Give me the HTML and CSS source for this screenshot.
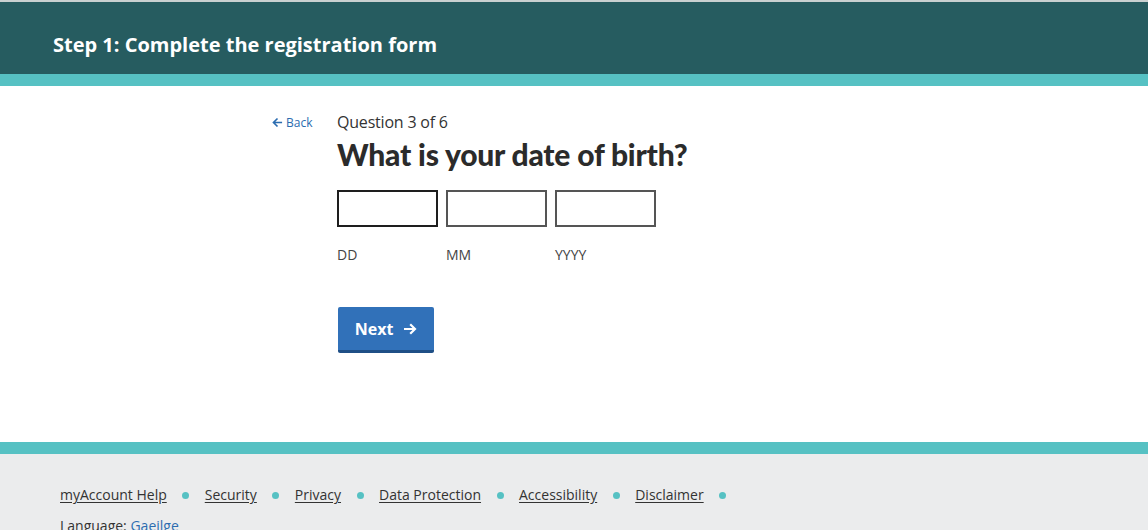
FILE: index.html
```html
<!DOCTYPE html>
<html lang="en">
<head>
<meta charset="utf-8">
<title>Step 1: Complete the registration form</title>
<link rel="stylesheet" href="styles.css">
</head>
<body>
<header class="site-header">
  <div class="header-bar">
    <h1 class="header-title">Step 1: Complete the registration form</h1>
  </div>
  <div class="header-stripe"></div>
</header>
<main class="content">
  <a class="back-link" href="#"><svg class="back-icon" viewBox="0 0 12 12" width="11" height="11" aria-hidden="true"><path d="M11 6H1.8M6 1.6L1.6 6 6 10.4" fill="none" stroke="currentColor" stroke-width="1.8"/></svg>Back</a>
  <div class="question">
    <p class="question-count">Question 3 of 6</p>
    <h2 class="question-title">What is your date of birth?</h2>
    <div class="date-fields">
      <div class="date-field">
        <input class="date-input date-input-focus" type="text" aria-label="DD">
        <span class="date-label">DD</span>
      </div>
      <div class="date-field">
        <input class="date-input" type="text" aria-label="MM">
        <span class="date-label">MM</span>
      </div>
      <div class="date-field">
        <input class="date-input" type="text" aria-label="YYYY">
        <span class="date-label">YYYY</span>
      </div>
    </div>
    <button class="next-button" type="button">Next <svg class="next-icon" viewBox="0 0 14 14" width="14" height="14" aria-hidden="true"><path d="M1 7h11M7.2 2.2L12 7 7.2 11.8" fill="none" stroke="currentColor" stroke-width="2.2"/></svg></button>
  </div>
</main>
<footer class="site-footer">
  <div class="footer-stripe"></div>
  <div class="footer-body">
    <ul class="footer-links">
      <li><a href="#">myAccount Help</a></li>
      <li><a href="#">Security</a></li>
      <li><a href="#">Privacy</a></li>
      <li><a href="#">Data Protection</a></li>
      <li><a href="#">Accessibility</a></li>
      <li><a href="#">Disclaimer</a></li>
    </ul>
    <p class="language">Language: <a href="#">Gaeilge</a></p>
  </div>
</footer>
</body>
</html>
```
FILE: styles.css
```css
* { box-sizing: border-box; }
html, body { margin: 0; padding: 0; }
body {
  font-family: "Open Sans", "Noto Sans", sans-serif;
  color: #333;
  background: #fff;
  overflow: hidden;
  height: 530px;
}
.site-header { border-top: 2px solid #c9d0d0; }
.header-bar {
  background: #265c60;
  height: 72px;
  display: flex;
  align-items: center;
  padding-left: 53px;
}
.header-title {
  margin: 0;
  color: #fff;
  font-size: 20px;
  font-weight: 700;
  letter-spacing: 0;
  padding-top: 12px;
}
.header-stripe { height: 12px; background: #56c1c3; }

.content {
  height: 356px;
  display: flex;
  padding-left: 272px;
  padding-top: 27px;
}
.back-link {
  color: #2b6cb0;
  font-size: 12px;
  text-decoration: none;
  display: flex;
  align-items: center;
  gap: 3px;
  height: 18px;
  width: 65px;
}
.back-icon { display: block; }
.question { display: flex; flex-direction: column; }
.question-count {
  margin: 0;
  font-size: 16px;
  line-height: 18px;
  color: #333;
  letter-spacing: -0.2px;
}
.question-title {
  margin: 5px 0 0;
  font-family: Lato, "Open Sans", sans-serif;
  font-weight: 900;
  font-size: 30px;
  line-height: 36px;
  color: #2b2b2b;
  letter-spacing: -0.2px;
}
.date-fields { display: flex; gap: 8px; margin-top: 18px; }
.date-field { display: flex; flex-direction: column; }
.date-input {
  width: 101px;
  height: 37px;
  border: 2px solid #555;
  border-radius: 0;
  margin: 0;
  padding: 0 6px;
  font: inherit;
}
.date-input-focus { border-color: #1e1e1e; }
.date-label {
  margin-top: 19px;
  font-size: 14px;
  line-height: 18px;
  color: #444;
}
.next-button {
  margin-top: 43px;
  margin-left: 1px;
  align-self: flex-start;
  width: 96px;
  height: 46px;
  background: #3171b9;
  border: none;
  border-bottom: 3px solid #1f4f86;
  border-radius: 2px;
  color: #fff;
  font-family: inherit;
  font-size: 16px;
  font-weight: 700;
  display: flex;
  align-items: center;
  justify-content: center;
  gap: 10px;
  padding: 0;
}
.next-icon { display: block; }

.footer-stripe { height: 12px; background: #56c1c3; }
.footer-body {
  background: #ebeced;
  height: 76px;
  padding: 31px 60px 0;
}
.footer-links {
  list-style: none;
  margin: 0;
  padding: 0;
  display: flex;
  align-items: center;
}
.footer-links li {
  display: flex;
  align-items: center;
  font-size: 14px;
  line-height: 20px;
}
.footer-links li::after {
  content: "";
  width: 7px;
  height: 7px;
  border-radius: 50%;
  background: #56c1c3;
  margin: 0 15.5px;
}
.footer-links a { color: #333; text-decoration: underline; text-underline-offset: 2px; }
.language { margin: 11px 0 0; font-size: 14px; color: #333; }
.language a { color: #2b6cb0; text-decoration: none; }
```
